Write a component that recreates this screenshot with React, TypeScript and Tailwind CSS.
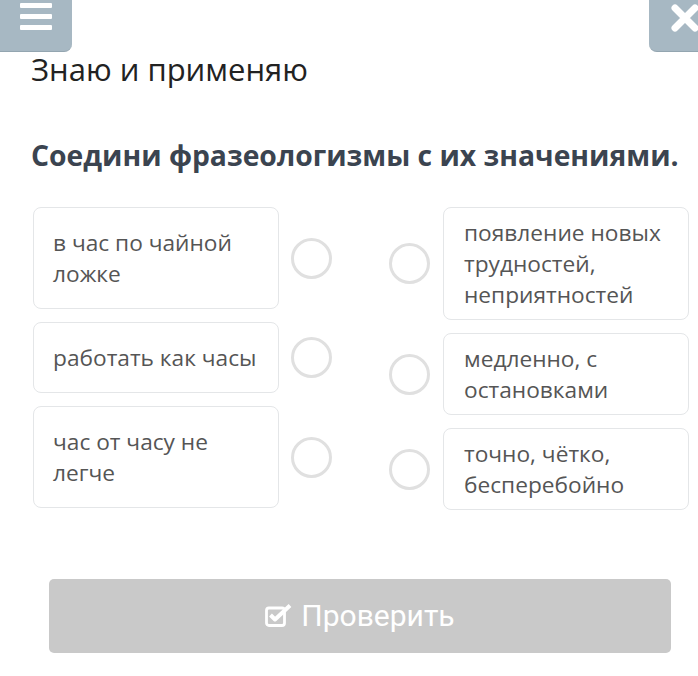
import React from "react";

const leftItems = [
  { text: "в час по чайной ложке" },
  { text: "работать как часы" },
  { text: "час от часу не легче" },
];
const rightItems = [
  { text: "появление новых трудностей, неприятностей" },
  { text: "медленно, с остановками" },
  { text: "точно, чётко, бесперебойно" },
];

function Circle() {
  return <div className="w-[41px] h-[41px] rounded-full border-[3px] border-[#e0e0e0] shrink-0" />;
}

export default function App() {
  return (
    <div className="w-[698px] h-[676px] bg-white relative overflow-hidden" style={{ fontFamily: '"Open Sans", sans-serif' }}>
      <div className="absolute left-0 top-0 w-[72px] h-[52px] bg-[#a7b8c3] rounded-br-[8px] flex flex-col items-center justify-start pt-[3px] gap-[6px] border-b border-[#93a5b0]">
        <div className="w-[32px] h-[5px] bg-white rounded-[1px]" />
        <div className="w-[32px] h-[5px] bg-white rounded-[1px]" />
        <div className="w-[32px] h-[5px] bg-white rounded-[1px]" />
      </div>
      <div className="absolute right-0 top-0 w-[49px] h-[52px] bg-[#a7b8c3] rounded-bl-[8px] border-b border-[#93a5b0]">
        <svg className="absolute left-[22px] top-[4px]" width="28" height="28" viewBox="0 0 28 28">
          <path d="M4 4 L24 24 M24 4 L4 24" stroke="white" strokeWidth="7" strokeLinecap="round" />
        </svg>
      </div>

      <div className="pt-[49px] pl-[31px]">
        <div className="text-[31px] leading-[40px] text-[#222]">Знаю и применяю</div>
        <div className="mt-[47px] text-[28.3px] leading-[38px] font-bold text-[#3b4450] whitespace-nowrap">
          Соедини фразеологизмы с их значениями.
        </div>
      </div>

      <div className="flex pl-[33px] mt-[33px] gap-0">
        <div className="flex flex-col gap-[13px]">
          {leftItems.map((it, i) => (
            <div key={i} className="flex items-center">
              <div className="w-[246px] rounded-[8px] border border-[#e4e6e8] px-[19px] py-[19px] text-[22.7px] leading-[31px] text-[#555]">
                {it.text}
              </div>
              <div className="ml-[12px]"><Circle /></div>
            </div>
          ))}
        </div>
        <div className="flex flex-col gap-[13px] ml-[57px]">
          {rightItems.map((it, i) => (
            <div key={i} className="flex items-center">
              <div className="mr-[13px]"><Circle /></div>
              <div className="w-[246px] rounded-[8px] border border-[#e4e6e8] px-[20px] py-[9px] text-[22.7px] leading-[31px] text-[#555]">
                {it.text}
              </div>
            </div>
          ))}
        </div>
      </div>

      <div className="absolute left-[49px] top-[579px] w-[622px] h-[74px] bg-[#c9c9c9] rounded-[5px] flex items-center justify-center gap-[9px] text-white">
        <svg width="27" height="24" viewBox="0 0 27 24" className="mt-[-3px]">
          <rect x="1.5" y="5" width="18" height="17.5" rx="2.5" fill="none" stroke="white" strokeWidth="2.8" />
          <path d="M5.5 12 L10 16.5 L25 2.5" fill="none" stroke="white" strokeWidth="4" strokeLinejoin="round" />
        </svg>
        <span className="text-[30px] leading-none" style={{ fontFamily: 'Roboto, sans-serif' }}>Проверить</span>
      </div>
    </div>
  );
}
